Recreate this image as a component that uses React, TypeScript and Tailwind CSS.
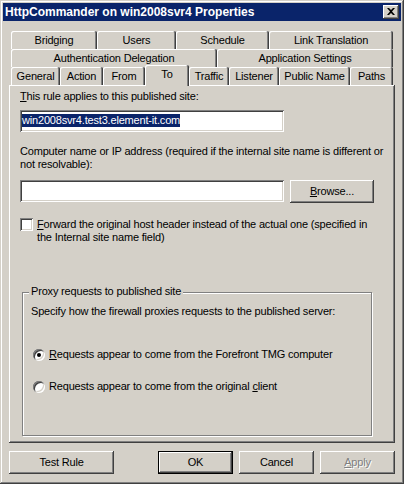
import React from "react";

const raised =
  "shadow-[inset_-1px_-1px_0_0_#404040,inset_1px_1px_0_0_#ffffff,inset_-2px_-2px_0_0_#808080]";
const sunken =
  "shadow-[inset_1px_1px_0_0_#808080,inset_-1px_-1px_0_0_#ffffff,inset_2px_2px_0_0_#404040,inset_-2px_-2px_0_0_#d4d0c8]";
const tabShadow =
  "shadow-[inset_-1px_0_0_0_#404040,inset_1px_1px_0_0_#ffffff,inset_-2px_0_0_0_#808080]";

function Tab({ label, w, selected }: { label: string; w: string; selected?: boolean }) {
  if (selected) {
    return (
      <div
        className={`${w} h-[21px] -mt-[2px] relative z-10 bg-[#d4d0c8] rounded-t-[2px] ${tabShadow} flex justify-center pt-[3px]`}
      >
        <span>{label}</span>
      </div>
    );
  }
  return (
    <div className={`${w} h-[18px] rounded-t-[2px] ${tabShadow} flex justify-center pt-[3px]`}>
      <span>{label}</span>
    </div>
  );
}

function Button({
  children,
  w,
  isDefault,
}: {
  children: React.ReactNode;
  w: string;
  isDefault?: boolean;
}) {
  if (isDefault) {
    return (
      <div className={`${w} h-[23px] border border-black`}>
        <div className={`w-full h-full ${raised} flex items-center justify-center`}>{children}</div>
      </div>
    );
  }
  return <div className={`${w} h-[23px] ${raised} flex items-center justify-center`}>{children}</div>;
}

export default function App() {
  return (
    <div
      className="w-[404px] h-[484px] bg-[#d4d0c8] text-black font-['Liberation_Sans',Arial,sans-serif] text-[11px] leading-[13px] tracking-[-0.18px] p-[3px] shadow-[inset_-1px_-1px_0_0_#404040,inset_1px_1px_0_0_#d4d0c8,inset_-2px_-2px_0_0_#808080,inset_2px_2px_0_0_#ffffff] overflow-hidden"
    >
      {/* Title bar */}
      <div className="h-[18px] bg-[#0a246a] flex items-start justify-between pl-[2px] pr-[2px]">
        <span className="text-white font-bold text-[12px] leading-[13px] tracking-normal mt-[3px]">
          HttpCommander on win2008svr4 Properties
        </span>
        <div className={`w-[16px] h-[14px] mt-[2px] bg-[#d4d0c8] ${raised} flex items-center justify-center`}>
          <svg width="8" height="7" viewBox="0 0 8 7" className="-mt-[1px] -ml-[1px]">
            <path d="M0 0h2l2 2 2-2h2L5 3.5 8 7H6L4 5 2 7H0l3-3.5z" fill="#000" />
          </svg>
        </div>
      </div>

      <div className="px-[6px] mt-[10px]">
        {/* Tabs */}
        <div className="pl-[2px]">
          <div className="flex">
            <Tab label="Bridging" w="w-[86px]" />
            <Tab label="Users" w="w-[79px]" />
            <Tab label="Schedule" w="w-[93px]" />
            <Tab label="Link Translation" w="w-[124px]" />
          </div>
          <div className="flex">
            <Tab label="Authentication Delegation" w="w-[206px]" />
            <Tab label="Application Settings" w="w-[176px]" />
          </div>
          <div className="flex items-start h-[18px]">
            <Tab label="General" w="w-[49px]" />
            <Tab label="Action" w="w-[43px]" />
            <Tab label="From" w="w-[42px]" />
            <Tab label="To" w="w-[44px]" selected />
            <Tab label="Traffic" w="w-[40px]" />
            <Tab label="Listener" w="w-[50px]" />
            <Tab label="Public Name" w="w-[71px]" />
            <Tab label="Paths" w="w-[43px]" />
          </div>
        </div>

        {/* Panel */}
        <div className={`w-[386px] h-[358px] pl-[11px] pt-[5px] ${raised}`}>
          <div>
            <span className="underline">T</span>his rule applies to this published site:
          </div>
          <div className={`w-[264px] h-[22px] mt-[7px] bg-white ${sunken} pl-[2px] pt-[4px]`}>
            <span className="bg-[#0a246a] text-white inline-block leading-[13px]">
              win2008svr4.test3.element-it.com
            </span>
          </div>

          <div className="mt-[13px] whitespace-nowrap">
            Computer name or IP address (required if the internal site name is different or
            <br />
            not resolvable):
          </div>

          <div className="flex mt-[9px] gap-[6px]">
            <div className={`w-[264px] h-[22px] bg-white ${sunken}`} />
            <Button w="w-[84px]">
              <span>
                <span className="underline">B</span>rowse...
              </span>
            </Button>
          </div>

          <div className="flex mt-[15px] gap-[4px] items-start">
            <div className={`w-[13px] h-[13px] shrink-0 bg-white ${sunken}`} />
            <div className="whitespace-nowrap">
              <span className="underline">F</span>orward the original host header instead of the actual one
              (specified in
              <br />
              the Internal site name field)
            </div>
          </div>

          {/* Group box */}
          <div className="relative ml-[2px] mt-[48px] w-[350px] h-[144px] border border-[#808080] shadow-[inset_1px_1px_0_0_#ffffff,1px_1px_0_0_#ffffff] pl-[8px] pt-[12px]">
            <div className="absolute left-[6px] -top-[8px] bg-[#d4d0c8] px-[2px]">
              Proxy requests to published site
            </div>
            <div>Specify how the firewall proxies requests to the published server:</div>

            <div className="flex items-center mt-[30px] ml-[2px] gap-[4px]">
              <div className={`w-[12px] h-[12px] rounded-full bg-white ${sunken} flex items-center justify-center`}>
                <div className="w-[4px] h-[4px] rounded-full bg-black" />
              </div>
              <div>
                <span className="underline">R</span>equests appear to come from the Forefront TMG computer
              </div>
            </div>

            <div className="flex items-center mt-[19px] ml-[2px] gap-[4px]">
              <div className={`w-[12px] h-[12px] rounded-full bg-white ${sunken}`} />
              <div>
                Requests appear to come from the original <span className="underline">c</span>lient
              </div>
            </div>
          </div>
        </div>

        {/* Buttons */}
        <div className="flex mt-[8px]">
          <Button w="w-[105px]">Test Rule</Button>
          <div className="ml-[44px]">
            <Button w="w-[75px]" isDefault>
              OK
            </Button>
          </div>
          <div className="ml-[6px]">
            <Button w="w-[75px]">Cancel</Button>
          </div>
          <div className="ml-[6px]">
            <Button w="w-[75px]">
              <span className="text-[#808080] [text-shadow:1px_1px_0_#ffffff]">
                <span className="underline">A</span>pply
              </span>
            </Button>
          </div>
        </div>
      </div>
    </div>
  );
}
